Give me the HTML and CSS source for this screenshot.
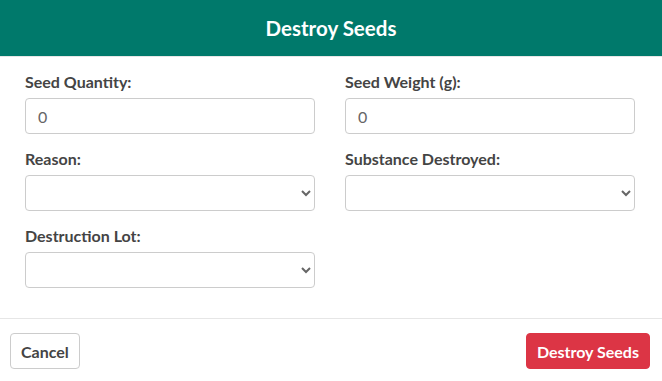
FILE: index.html
```html
<!DOCTYPE html>
<html lang="en">
<head>
    <meta charset="UTF-8">
    <meta name="viewport" content="width=device-width, initial-scale=1.0">
    <title>Destroy Seeds</title>
    <link rel="stylesheet" href="styles.css">
</head>
<body>
    <div class="modal">
        <div class="modal-header">
            <h2>Destroy Seeds</h2>
        </div>

        <form class="modal-body">
            <div class="field">
                <label for="seedQty">Seed Quantity:</label>
                <input type="text" id="seedQty" value="0">
            </div>
            <div class="field">
                <label for="seedWeight">Seed Weight (g):</label>
                <input type="text" id="seedWeight" value="0">
            </div>
            <div class="field">
                <label for="reason">Reason:</label>
                <select id="reason"><option></option></select>
            </div>
            <div class="field">
                <label for="substance">Substance Destroyed:</label>
                <select id="substance"><option></option></select>
            </div>
            <div class="field">
                <label for="lot">Destruction Lot:</label>
                <select id="lot"><option></option></select>
            </div>
        </form>

        <div class="modal-footer">
            <button type="button" class="btn btn-cancel">Cancel</button>
            <button type="button" class="btn btn-danger">Destroy Seeds</button>
        </div>
    </div>
</body>
</html>
```

FILE: styles.css
```css
body {
    font-family: 'Lato', sans-serif;
    margin: 0;
    padding: 0;
    background: #fff;
    color: #444;
}
.modal {
    width: 662px;
}
.modal-header {
    background-color: #00796b;
    height: 56px;
    display: flex;
    align-items: center;
    justify-content: center;
    border-bottom: 1px solid #e6e6e6;
}
.modal-header h2 {
    margin: 0;
    color: #fff;
    font-size: 20.5px;
    font-weight: 700;
}
.modal-body {
    display: grid;
    grid-template-columns: 290px 290px;
    column-gap: 30px;
    padding: 15px 27px 15px 25px;
}
.field {
    margin-bottom: 15px;
}
.field label {
    display: block;
    font-size: 16px;
    font-weight: 700;
    line-height: 20px;
    margin-bottom: 6px;
    color: #444;
}
input, select {
    display: block;
    width: 100%;
    height: 36px;
    box-sizing: border-box;
    border: 1px solid #ccc;
    border-radius: 4px;
    background: #fff;
    font-family: 'Lato', sans-serif;
    font-size: 16px;
    color: #666;
    padding: 0 12px;
    margin: 0;
}
select {
    padding: 0 8px;
}
.modal-footer {
    display: flex;
    justify-content: space-between;
    border-top: 1px solid #e6e6e6;
    padding: 14px 12px 12px 10px;
}
.btn {
    height: 36px;
    border-radius: 4px;
    font-family: 'Lato', sans-serif;
    font-size: 16px;
    font-weight: 700;
    padding: 0 10px;
    cursor: pointer;
}
.btn-cancel {
    background: #fff;
    border: 1px solid #ccc;
    color: #444;
}
.btn-danger {
    background: #dc3545;
    border: 1px solid #dc3545;
    color: #fff;
}
```
